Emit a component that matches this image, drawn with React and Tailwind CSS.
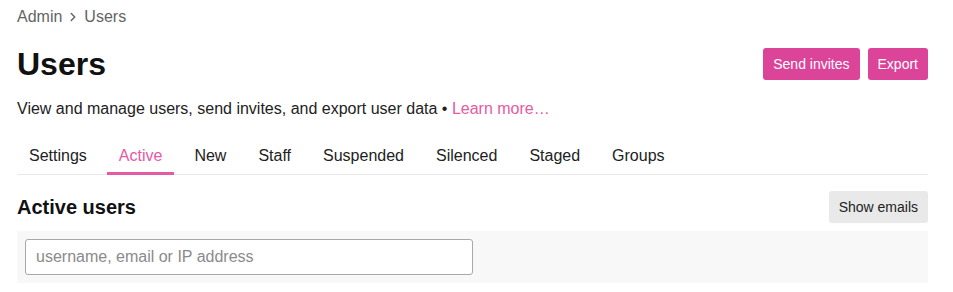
import React from "react"
import { ChevronRight } from "lucide-react"

const tabs = ["Settings", "Active", "New", "Staff", "Suspended", "Silenced", "Staged", "Groups"]

export default function App() {
  return (
    <div
      className="pl-[17px] pr-[25px] text-[#222]"
      style={{ fontFamily: '"Liberation Sans", Arial, sans-serif' }}
    >
      <div className="flex items-center pt-[6px] h-[28px] text-[16px] text-[#646464]">
        <span>Admin</span>
        <ChevronRight className="w-[14px] h-[14px] mx-[4px]" strokeWidth={2.5} />
        <span>Users</span>
      </div>

      <div className="flex items-center justify-between mt-[20px] h-[32px]">
        <h1 className="text-[32px] font-bold text-[#111] leading-none">Users</h1>
        <div className="flex gap-[8px]">
          <button className="h-[32px] px-[10px] rounded-[3px] bg-[#db4499] text-white text-[14px]">
            Send invites
          </button>
          <button className="h-[32px] px-[10px] rounded-[3px] bg-[#db4499] text-white text-[14px]">
            Export
          </button>
        </div>
      </div>

      <p className="mt-[19px] text-[16px] leading-[20px]">
        View and manage users, send invites, and export user data •{" "}
        <a className="text-[#e45aa6]">Learn more…</a>
      </p>

      <div className="flex gap-[8px] mt-[19px] border-b border-[#e9e9e9]">
        {tabs.map((t) => (
          <div
            key={t}
            className={
              "px-[12px] pt-[8px] pb-[6px] text-[16px] leading-[20px] border-b-[3px] -mb-[1px] " +
              (t === "Active" ? "border-[#e45aa6] text-[#e45aa6]" : "border-transparent")
            }
          >
            {t}
          </div>
        ))}
      </div>

      <div className="flex items-center justify-between mt-[16px] h-[32px]">
        <h2 className="text-[20px] font-bold text-[#111]">Active users</h2>
        <button className="h-[32px] px-[10px] rounded-[3px] bg-[#e9e9e9] text-[14px] text-[#222]">
          Show emails
        </button>
      </div>

      <div className="mt-[8px] bg-[#f8f8f8] p-[8px]">
        <input
          placeholder="username, email or IP address"
          className="w-[448px] h-[36px] px-[10px] border border-[#a8a8a8] rounded-[3px] bg-white text-[16px] placeholder:text-[#8a8a8a] outline-none"
        />
      </div>
    </div>
  )
}
